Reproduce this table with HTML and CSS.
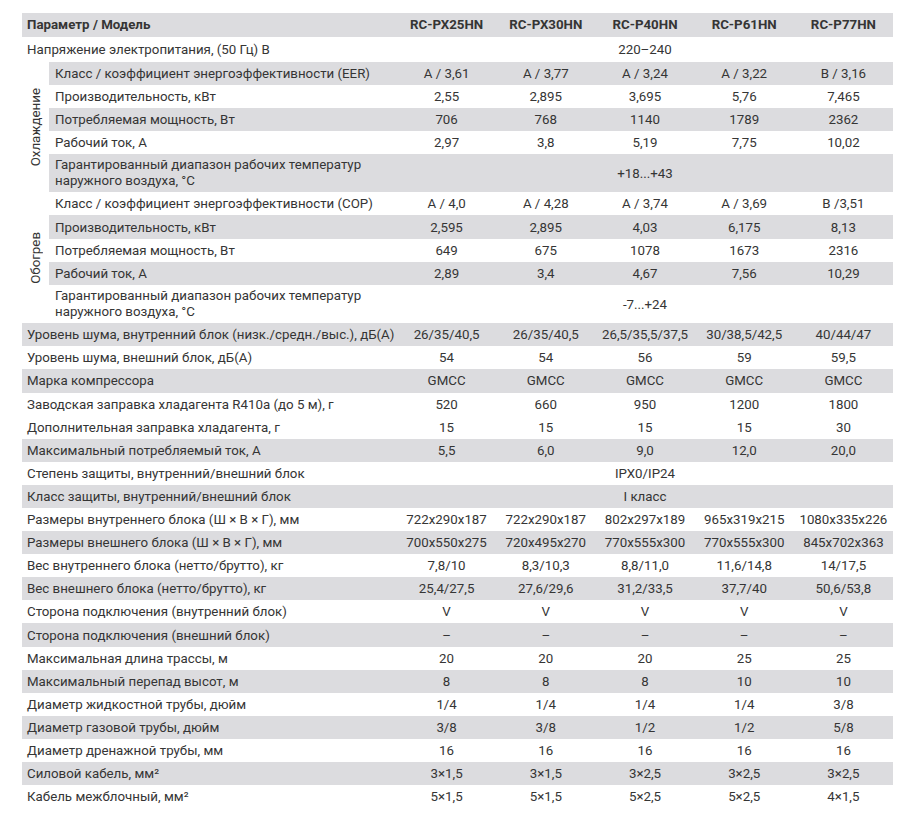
FILE: index.html
```html
<!DOCTYPE html>
<html lang="ru">
<head>
<meta charset="utf-8">
<title>Технические характеристики</title>
<link rel="stylesheet" href="styles.css">
</head>
<body>
<div class="spec">
  <div class="row head">
    <div class="lbl">Параметр / Модель</div>
    <div class="val">RC-PX25HN</div><div class="val">RC-PX30HN</div><div class="val">RC-P40HN</div><div class="val">RC-P61HN</div><div class="val">RC-P77HN</div>
  </div>
  <div class="row tall1">
    <div class="lbl">Напряжение электропитания, (50 Гц) В</div>
    <div class="val all">220–240</div>
  </div>

  <div class="group">
    <div class="glabel"><span>Охлаждение</span></div>
    <div class="grows">
      <div class="row sub gray"><div class="lbl">Класс / коэффициент энергоэффективности (EER)</div><div class="val">A / 3,61</div><div class="val">A / 3,77</div><div class="val">A / 3,24</div><div class="val">A / 3,22</div><div class="val">B / 3,16</div></div>
      <div class="row sub"><div class="lbl">Производительность, кВт</div><div class="val">2,55</div><div class="val">2,895</div><div class="val">3,695</div><div class="val">5,76</div><div class="val">7,465</div></div>
      <div class="row sub gray"><div class="lbl">Потребляемая мощность, Вт</div><div class="val">706</div><div class="val">768</div><div class="val">1140</div><div class="val">1789</div><div class="val">2362</div></div>
      <div class="row sub"><div class="lbl">Рабочий ток, А</div><div class="val">2,97</div><div class="val">3,8</div><div class="val">5,19</div><div class="val">7,75</div><div class="val">10,02</div></div>
      <div class="row sub gray double"><div class="lbl">Гарантированный диапазон рабочих температур<br>наружного воздуха, °С</div><div class="val all">+18...+43</div></div>
    </div>
  </div>

  <div class="group">
    <div class="glabel"><span>Обогрев</span></div>
    <div class="grows">
      <div class="row sub"><div class="lbl">Класс / коэффициент энергоэффективности (COP)</div><div class="val">A / 4,0</div><div class="val">A / 4,28</div><div class="val">A / 3,74</div><div class="val">A / 3,69</div><div class="val">B /3,51</div></div>
      <div class="row sub gray"><div class="lbl">Производительность, кВт</div><div class="val">2,595</div><div class="val">2,895</div><div class="val">4,03</div><div class="val">6,175</div><div class="val">8,13</div></div>
      <div class="row sub"><div class="lbl">Потребляемая мощность, Вт</div><div class="val">649</div><div class="val">675</div><div class="val">1078</div><div class="val">1673</div><div class="val">2316</div></div>
      <div class="row sub gray"><div class="lbl">Рабочий ток, А</div><div class="val">2,89</div><div class="val">3,4</div><div class="val">4,67</div><div class="val">7,56</div><div class="val">10,29</div></div>
      <div class="row sub double"><div class="lbl">Гарантированный диапазон рабочих температур<br>наружного воздуха, °С</div><div class="val all">-7...+24</div></div>
    </div>
  </div>

  <div class="row gray"><div class="lbl">Уровень шума, внутренний блок (низк./средн./выс.), дБ(А)</div><div class="val">26/35/40,5</div><div class="val">26/35/40,5</div><div class="val">26,5/35,5/37,5</div><div class="val">30/38,5/42,5</div><div class="val">40/44/47</div></div>
  <div class="row"><div class="lbl">Уровень шума, внешний блок, дБ(А)</div><div class="val">54</div><div class="val">54</div><div class="val">56</div><div class="val">59</div><div class="val">59,5</div></div>
  <div class="row gray"><div class="lbl">Марка компрессора</div><div class="val">GMCC</div><div class="val">GMCC</div><div class="val">GMCC</div><div class="val">GMCC</div><div class="val">GMCC</div></div>
  <div class="row"><div class="lbl">Заводская заправка хладагента R410a (до 5 м), г</div><div class="val">520</div><div class="val">660</div><div class="val">950</div><div class="val">1200</div><div class="val">1800</div></div>
  <div class="row"><div class="lbl">Дополнительная заправка хладагента, г</div><div class="val">15</div><div class="val">15</div><div class="val">15</div><div class="val">15</div><div class="val">30</div></div>
  <div class="row gray"><div class="lbl">Максимальный потребляемый ток, А</div><div class="val">5,5</div><div class="val">6,0</div><div class="val">9,0</div><div class="val">12,0</div><div class="val">20,0</div></div>
  <div class="row"><div class="lbl">Степень защиты, внутренний/внешний блок</div><div class="val all">IPX0/IP24</div></div>
  <div class="row gray"><div class="lbl">Класс защиты, внутренний/внешний блок</div><div class="val all">I класс</div></div>
  <div class="row"><div class="lbl">Размеры внутреннего блока (Ш × В × Г), мм</div><div class="val">722x290x187</div><div class="val">722x290x187</div><div class="val">802x297x189</div><div class="val">965x319x215</div><div class="val">1080x335x226</div></div>
  <div class="row gray"><div class="lbl">Размеры внешнего блока (Ш × В × Г), мм</div><div class="val">700x550x275</div><div class="val">720x495x270</div><div class="val">770x555x300</div><div class="val">770x555x300</div><div class="val">845x702x363</div></div>
  <div class="row"><div class="lbl">Вес внутреннего блока (нетто/брутто), кг</div><div class="val">7,8/10</div><div class="val">8,3/10,3</div><div class="val">8,8/11,0</div><div class="val">11,6/14,8</div><div class="val">14/17,5</div></div>
  <div class="row gray"><div class="lbl">Вес внешнего блока (нетто/брутто), кг</div><div class="val">25,4/27,5</div><div class="val">27,6/29,6</div><div class="val">31,2/33,5</div><div class="val">37,7/40</div><div class="val">50,6/53,8</div></div>
  <div class="row"><div class="lbl">Сторона подключения (внутренний блок)</div><div class="val">V</div><div class="val">V</div><div class="val">V</div><div class="val">V</div><div class="val">V</div></div>
  <div class="row gray"><div class="lbl">Сторона подключения (внешний блок)</div><div class="val">–</div><div class="val">–</div><div class="val">–</div><div class="val">–</div><div class="val">–</div></div>
  <div class="row"><div class="lbl">Максимальная длина трассы, м</div><div class="val">20</div><div class="val">20</div><div class="val">20</div><div class="val">25</div><div class="val">25</div></div>
  <div class="row gray"><div class="lbl">Максимальный перепад высот, м</div><div class="val">8</div><div class="val">8</div><div class="val">8</div><div class="val">10</div><div class="val">10</div></div>
  <div class="row"><div class="lbl">Диаметр жидкостной трубы, дюйм</div><div class="val">1/4</div><div class="val">1/4</div><div class="val">1/4</div><div class="val">1/4</div><div class="val">3/8</div></div>
  <div class="row gray"><div class="lbl">Диаметр газовой трубы, дюйм</div><div class="val">3/8</div><div class="val">3/8</div><div class="val">1/2</div><div class="val">1/2</div><div class="val">5/8</div></div>
  <div class="row"><div class="lbl">Диаметр дренажной трубы, мм</div><div class="val">16</div><div class="val">16</div><div class="val">16</div><div class="val">16</div><div class="val">16</div></div>
  <div class="row gray"><div class="lbl">Силовой кабель, мм²</div><div class="val">3×1,5</div><div class="val">3×1,5</div><div class="val">3×2,5</div><div class="val">3×2,5</div><div class="val">3×2,5</div></div>
  <div class="row"><div class="lbl">Кабель межблочный, мм²</div><div class="val">5×1,5</div><div class="val">5×1,5</div><div class="val">5×2,5</div><div class="val">5×2,5</div><div class="val">4×1,5</div></div>
</div>
</body>
</html>
```
FILE: styles.css
```css
html, body {
  margin: 0;
  padding: 0;
  background: #ffffff;
}
body {
  padding: 13px 0 0 22px;
  font-family: Roboto, "Liberation Sans", sans-serif;
  font-size: 13.3px;
  color: #353535;
}
.spec {
  width: 871px;
}
.row {
  display: grid;
  grid-template-columns: 375px repeat(5, 1fr);
  height: 23.1px;
  align-items: center;
}
.row.gray {
  background: #dcdcdf;
}
.row.head {
  background: #dcdcdf;
  height: 23.5px;
  font-weight: 700;
}
.row.tall1 {
  height: 25px;
}
.lbl {
  padding-left: 5px;
  white-space: nowrap;
}
.val {
  text-align: center;
  white-space: nowrap;
}
.val.all {
  grid-column: 2 / -1;
}
.group {
  display: flex;
}
.glabel {
  width: 27px;
  flex: none;
  display: flex;
  align-items: center;
  justify-content: center;
}
.glabel span {
  writing-mode: vertical-rl;
  transform: rotate(180deg);
  white-space: nowrap;
}
.grows {
  flex: 1;
}
.row.sub {
  grid-template-columns: 348px repeat(5, 1fr);
}
.row.sub .lbl {
  padding-left: 6px;
}
.row.double {
  height: 38.5px;
}
.row.double .lbl {
  line-height: 16px;
  white-space: normal;
}
```
